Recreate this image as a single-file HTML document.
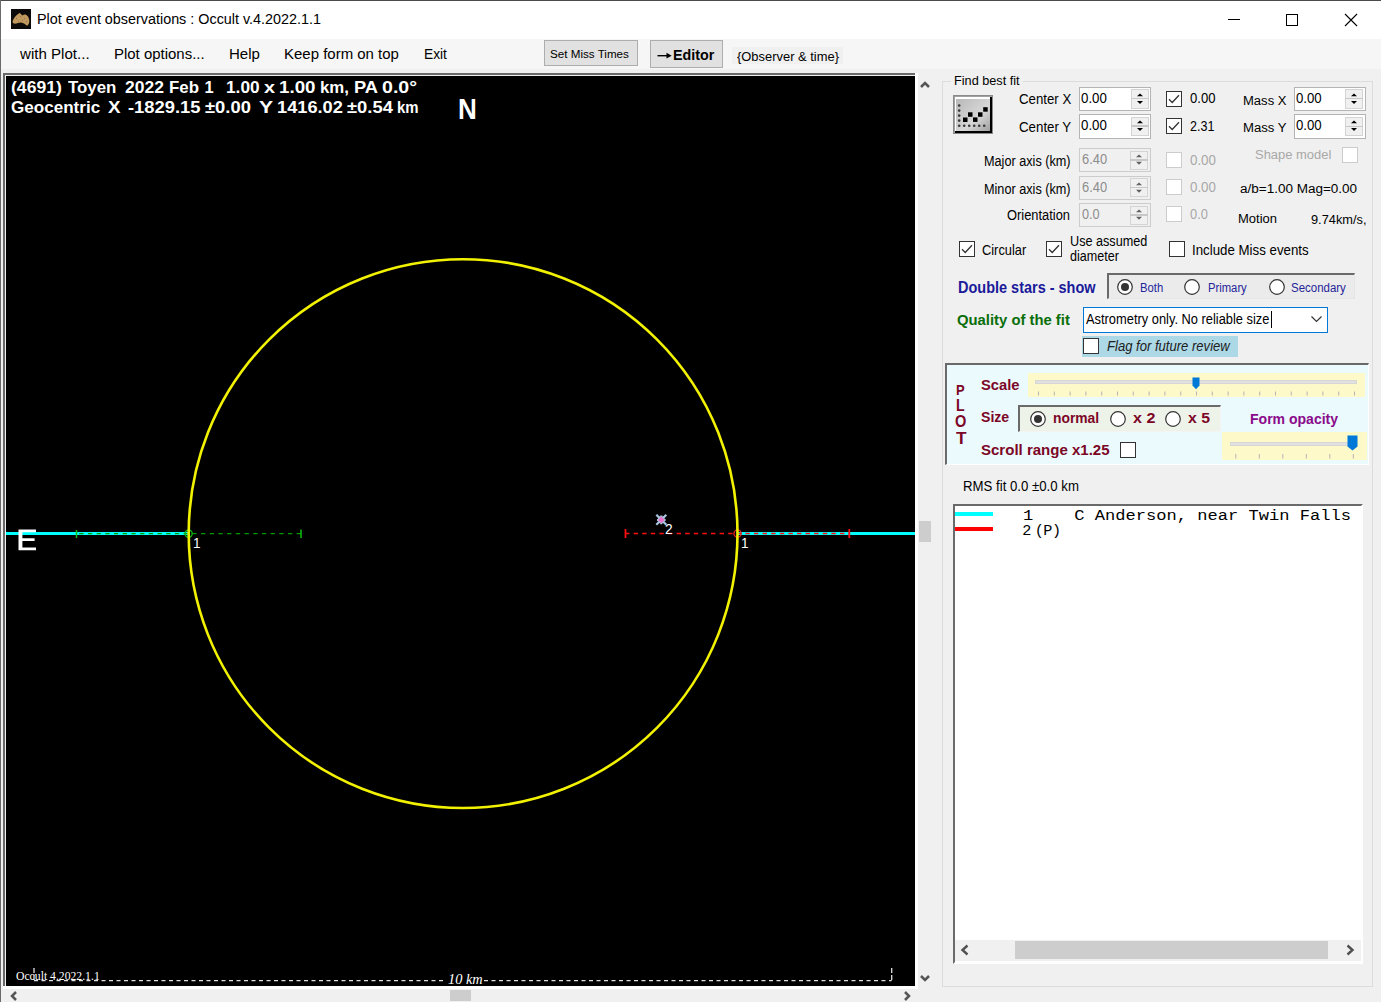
<!DOCTYPE html>
<html><head><meta charset="utf-8"><style>
html,body{margin:0;padding:0;width:1381px;height:1002px;overflow:hidden;background:#f0f0f0}
body>div{position:absolute;white-space:pre;box-sizing:border-box}
</style></head><body>
<div style="left:0px;top:0px;width:1381px;height:39px;background:#fff"></div>
<div style="left:0px;top:0px;width:1381px;height:1px;background:#4a4a4a"></div>
<div style="left:0px;top:0px;width:1px;height:1002px;background:#6a6a6a"></div>
<svg style="position:absolute;left:11px;top:9px" width="20" height="20" viewBox="0 0 20 20"><rect width="20" height="20" fill="#0c0a0a"/><path d="M1.5 12.5C2.5 9 5 6 8.5 4C10 4.5 10.5 6 11.5 6.5C12.5 5.5 13.5 5.2 15 5.8C17 7 18 9 18.3 11.5C18.5 14 17.5 16 16 16.8C14.5 15.5 12.5 14 10 13.6C8 13.8 5.5 14.8 3 14.6C2 14.2 1.5 13.5 1.5 12.5Z" fill="#c09a5c"/><path d="M5 9L6 10M9 7L10 8M13 9L14 10M7 12L8 12.5M15 12L16 13M11 11L12 11.5" stroke="#9a6a6a" stroke-width="1"/></svg>
<div style="left:36.80px;top:12.30px;font:normal normal 14.53px/14.53px 'Liberation Sans',sans-serif;color:#000;transform:scaleX(0.9895);transform-origin:0 0;">Plot event observations : Occult v.4.2022.1.1</div>
<div style="left:1228px;top:19px;width:12px;height:1px;background:#000"></div>
<div style="left:1286px;top:14px;width:12px;height:12px;border:1px solid #000"></div>
<svg style="position:absolute;left:1344px;top:13px" width="14" height="14" viewBox="0 0 14 14"><path d="M1 1L13 13M13 1L1 13" stroke="#000" stroke-width="1.1"/></svg>
<div style="left:1px;top:39px;width:1380px;height:963px;background:#f0f0f0"></div>
<div style="left:1px;top:39px;width:1380px;height:30.3px;background:#f6f6f6"></div>
<div style="left:20.13px;top:46.65px;font:normal normal 14.24px/14.24px 'Liberation Sans',sans-serif;color:#000;transform:scaleX(1.0596);transform-origin:0 0;">with Plot...</div>
<div style="left:114.00px;top:46.65px;font:normal normal 14.24px/14.24px 'Liberation Sans',sans-serif;color:#000;transform:scaleX(1.0507);transform-origin:0 0;">Plot options...</div>
<div style="left:228.70px;top:46.65px;font:normal normal 14.24px/14.24px 'Liberation Sans',sans-serif;color:#000;transform:scaleX(1.0569);transform-origin:0 0;">Help</div>
<div style="left:284.00px;top:46.65px;font:normal normal 14.24px/14.24px 'Liberation Sans',sans-serif;color:#000;transform:scaleX(1.0526);transform-origin:0 0;">Keep form on top</div>
<div style="left:423.90px;top:46.65px;font:normal normal 14.24px/14.24px 'Liberation Sans',sans-serif;color:#000;transform:scaleX(0.9666);transform-origin:0 0;">Exit</div>
<div style="left:544px;top:40px;width:94px;height:26.3px;background:#e1e1e1;border:1px solid #adadad"></div>
<div style="left:550.20px;top:48.00px;font:normal normal 11.7px/11.7px 'Liberation Sans',sans-serif;color:#000;transform:scaleX(0.9955);transform-origin:0 0;">Set Miss Times</div>
<div style="left:650px;top:40.3px;width:73px;height:28.2px;background:#e1e1e1;border:1px solid #adadad"></div>
<svg style="position:absolute;left:657px;top:51px" width="16" height="9" viewBox="0 0 16 9"><path d="M0.5 4.7H11" stroke="#000" stroke-width="1.4"/><path d="M9.5 1.8L14.7 4.7L9.5 7.6Z" fill="#000"/></svg>
<div style="left:673.10px;top:47.00px;font:normal bold 15px/15px 'Liberation Sans',sans-serif;color:#000;transform:scaleX(0.9545);transform-origin:0 0;">Editor</div>
<div style="left:732px;top:47px;width:111px;height:17px;background:#f0f0f0"></div>
<div style="left:736.50px;top:49.77px;font:normal normal 13.5px/13.5px 'Liberation Sans',sans-serif;color:#000;transform:scaleX(0.9568);transform-origin:0 0;">{Observer &amp; time}</div>
<div style="left:3px;top:73px;width:915px;height:916px;background:#fff"></div>
<div style="left:3px;top:73px;width:912px;height:2px;background:#696969"></div>
<div style="left:3px;top:73px;width:2px;height:913px;background:#696969"></div>
<div style="left:5px;top:75px;width:910px;height:1px;background:#f0f0f0"></div>
<div style="left:5px;top:75px;width:1px;height:911px;background:#f0f0f0"></div>
<div style="left:6px;top:76px;width:909px;height:910px;background:#000"></div>
<svg style="position:absolute;left:0;top:0" width="1381" height="1002">
<defs><clipPath id="pc"><rect x="6" y="76" width="909" height="910"/></clipPath></defs>
<g clip-path="url(#pc)">
<line x1="6" y1="533.5" x2="188" y2="533.5" stroke="#00ffff" stroke-width="3"/>
<line x1="738" y1="533.5" x2="915" y2="533.5" stroke="#00ffff" stroke-width="3"/>
<line x1="301" y1="533.6" x2="77" y2="533.6" stroke="#009a00" stroke-width="1.4" stroke-dasharray="4.3 4.4"/>
<line x1="76.5" y1="530" x2="76.5" y2="538" stroke="#10c010" stroke-width="1.5"/>
<line x1="301" y1="529.5" x2="301" y2="538" stroke="#10c010" stroke-width="1.5"/>
<line x1="625" y1="533.5" x2="849" y2="533.5" stroke="#ff1010" stroke-width="1.6" stroke-dasharray="4.4 4.2"/>
<line x1="625.5" y1="529" x2="625.5" y2="538" stroke="#ff1010" stroke-width="1.8"/>
<line x1="849.3" y1="529" x2="849.3" y2="538" stroke="#ff1010" stroke-width="1.8"/>
<circle cx="188.6" cy="533.6" r="3.6" fill="none" stroke="#10b010" stroke-width="1.4"/>
<circle cx="737.6" cy="533.5" r="3.6" fill="none" stroke="#e02020" stroke-width="1.4"/>
<circle cx="463.1" cy="533.6" r="274.4" fill="none" stroke="#f2f200" stroke-width="2.6"/>
<path d="M656.3 514.8L666.3 524.8M666.3 514.8L656.3 524.8M661.3 515.5V524.3M657 520H665.6" stroke="#a8c4e0" stroke-width="2.2"/>
<rect x="658" y="516.5" width="6.6" height="6.6" fill="#a8c4e0"/>
<path d="M661.3 516.6L664.6 519.9L661.3 523.2L658 519.9Z" fill="#e870c8"/>
<line x1="34" y1="980.7" x2="446" y2="980.7" stroke="#e0e0e0" stroke-width="1.3" stroke-dasharray="4 3.5"/>
<line x1="34" y1="968" x2="34" y2="981" stroke="#e0e0e0" stroke-width="1.3" stroke-dasharray="5 2"/>
<line x1="484" y1="980.7" x2="891.7" y2="980.7" stroke="#e0e0e0" stroke-width="1.3" stroke-dasharray="4 3.5"/>
<line x1="891.7" y1="968" x2="891.7" y2="981" stroke="#e0e0e0" stroke-width="1.3" stroke-dasharray="5 2"/>
</g></svg>
<div style="left:10.80px;top:79.33px;font:normal bold 16.5px/16.5px 'Liberation Sans',sans-serif;color:#fff;transform:scaleX(1.0660);transform-origin:0 0;">(4691)</div>
<div style="left:68.30px;top:79.33px;font:normal bold 16.5px/16.5px 'Liberation Sans',sans-serif;color:#fff;transform:scaleX(1.0216);transform-origin:0 0;">Toyen</div>
<div style="left:125.00px;top:79.33px;font:normal bold 16.5px/16.5px 'Liberation Sans',sans-serif;color:#fff;transform:scaleX(1.0612);transform-origin:0 0;">2022</div>
<div style="left:169.00px;top:79.33px;font:normal bold 16.5px/16.5px 'Liberation Sans',sans-serif;color:#fff;transform:scaleX(1.0213);transform-origin:0 0;">Feb</div>
<div style="left:226.30px;top:79.33px;font:normal bold 16.5px/16.5px 'Liberation Sans',sans-serif;color:#fff;transform:scaleX(1.0459);transform-origin:0 0;">1.00</div>
<div style="left:264.00px;top:79.33px;font:normal bold 16.5px/16.5px 'Liberation Sans',sans-serif;color:#fff;transform:scaleX(1.2055);transform-origin:0 0;">x</div>
<div style="left:279.00px;top:79.33px;font:normal bold 16.5px/16.5px 'Liberation Sans',sans-serif;color:#fff;transform:scaleX(1.1362);transform-origin:0 0;">1.00</div>
<div style="left:319.60px;top:79.33px;font:normal bold 16.5px/16.5px 'Liberation Sans',sans-serif;color:#fff;transform:scaleX(1.0185);transform-origin:0 0;">km,</div>
<div style="left:354.20px;top:79.33px;font:normal bold 16.5px/16.5px 'Liberation Sans',sans-serif;color:#fff;transform:scaleX(1.1080);transform-origin:0 0;">PA</div>
<div style="left:381.70px;top:79.33px;font:normal bold 16.5px/16.5px 'Liberation Sans',sans-serif;color:#fff;transform:scaleX(1.1864);transform-origin:0 0;">0.0&deg;</div>
<div style="left:204.50px;top:79.33px;font:normal bold 16.5px/16.5px 'Liberation Sans',sans-serif;color:#fff;">1</div>
<div style="left:10.80px;top:99.03px;font:normal bold 16.5px/16.5px 'Liberation Sans',sans-serif;color:#fff;transform:scaleX(1.0342);transform-origin:0 0;">Geocentric</div>
<div style="left:108.30px;top:99.03px;font:normal bold 16.5px/16.5px 'Liberation Sans',sans-serif;color:#fff;transform:scaleX(1.1364);transform-origin:0 0;">X</div>
<div style="left:128.30px;top:99.03px;font:normal bold 16.5px/16.5px 'Liberation Sans',sans-serif;color:#fff;transform:scaleX(1.1132);transform-origin:0 0;">-1829.15</div>
<div style="left:205.00px;top:99.03px;font:normal bold 16.5px/16.5px 'Liberation Sans',sans-serif;color:#fff;transform:scaleX(1.1137);transform-origin:0 0;">&plusmn;0.00</div>
<div style="left:259.20px;top:99.03px;font:normal bold 16.5px/16.5px 'Liberation Sans',sans-serif;color:#fff;transform:scaleX(1.2818);transform-origin:0 0;">Y</div>
<div style="left:276.70px;top:99.03px;font:normal bold 16.5px/16.5px 'Liberation Sans',sans-serif;color:#fff;transform:scaleX(1.1036);transform-origin:0 0;">1416.02</div>
<div style="left:346.70px;top:99.03px;font:normal bold 16.5px/16.5px 'Liberation Sans',sans-serif;color:#fff;transform:scaleX(1.1137);transform-origin:0 0;">&plusmn;0.54</div>
<div style="left:396.70px;top:99.03px;font:normal bold 16.5px/16.5px 'Liberation Sans',sans-serif;color:#fff;transform:scaleX(0.9047);transform-origin:0 0;">km</div>
<div style="left:458.20px;top:93.70px;font:normal bold 29.65px/29.65px 'Liberation Sans',sans-serif;color:#fff;transform:scaleX(0.8788);transform-origin:0 0;">N</div>
<svg style="position:absolute;left:0;top:0" width="60" height="600"><path d="M18.5 529.6H36V532.2H22.4V538.3H34.6V540.9H22.4V547.6H36V550.2H18.5Z" fill="#fff"/></svg>
<div style="left:192.50px;top:536.06px;font:normal normal 14.1px/14.1px 'Liberation Sans',sans-serif;color:#fff;transform:scaleX(0.9609);transform-origin:0 0;">1</div>
<div style="left:741.30px;top:536.06px;font:normal normal 14.1px/14.1px 'Liberation Sans',sans-serif;color:#fff;transform:scaleX(0.9609);transform-origin:0 0;">1</div>
<div style="left:664.60px;top:521.95px;font:normal normal 14.24px/14.24px 'Liberation Sans',sans-serif;color:#fff;transform:scaleX(0.9699);transform-origin:0 0;">2</div>
<div style="left:15.50px;top:969.91px;font:normal normal 12.52px/12.52px 'Liberation Serif',sans-serif;color:#fff;transform:scaleX(0.9335);transform-origin:0 0;">Occult 4.2022.1.1</div>
<div style="left:447.50px;top:971.72px;font:italic normal 14.66px/14.66px 'Liberation Serif',sans-serif;color:#fff;transform:scaleX(0.9814);transform-origin:0 0;">10 km</div>
<svg style="position:absolute;left:919px;top:79px" width="12" height="10" viewBox="0 0 12 10"><path d="M2 8L6 4L10 8" stroke="#555" stroke-width="2.5" fill="none"/></svg>
<svg style="position:absolute;left:919px;top:974px" width="12" height="10" viewBox="0 0 12 10"><path d="M2 2L6 6L10 2" stroke="#555" stroke-width="2.5" fill="none"/></svg>
<div style="left:919px;top:521px;width:12px;height:21px;background:#cdcdcd"></div>
<svg style="position:absolute;left:9px;top:990px" width="10" height="12" viewBox="0 0 10 12"><path d="M7 2L3 6L7 10" stroke="#555" stroke-width="2.5" fill="none"/></svg>
<svg style="position:absolute;left:902px;top:990px" width="10" height="12" viewBox="0 0 10 12"><path d="M3 2L7 6L3 10" stroke="#555" stroke-width="2.5" fill="none"/></svg>
<div style="left:450px;top:989.5px;width:21px;height:11.5px;background:#cdcdcd"></div>
<div style="left:942px;top:81px;width:431px;height:906px;border:1px solid #dcdcdc"></div>
<div style="left:951px;top:74px;width:72px;height:14px;background:#f0f0f0"></div>
<div style="left:954.00px;top:75.17px;font:normal normal 12.79px/12.79px 'Liberation Sans',sans-serif;color:#000;transform:scaleX(0.9927);transform-origin:0 0;">Find best fit</div>
<svg style="position:absolute;left:953px;top:95px" width="41" height="40" viewBox="0 0 41 40">
<defs><linearGradient id="fg" x1="0" y1="0" x2="1" y2="1"><stop offset="0" stop-color="#b8b8b8"/><stop offset="0.6" stop-color="#d8d8d8"/><stop offset="1" stop-color="#a0a0a0"/></linearGradient></defs>
<rect x="0.5" y="0.5" width="39" height="38" fill="#a0a0a0" stroke="#8a8a8a"/>
<rect x="2" y="2" width="37" height="36" fill="#000"/>
<rect x="2" y="2" width="35" height="34" fill="#fff"/>
<rect x="3" y="4" width="34" height="32" fill="url(#fg)"/>
<g fill="#383838">
<circle cx="6.2" cy="10.5" r="1.3"/><circle cx="6.2" cy="15.6" r="1.3"/><circle cx="6.2" cy="20.6" r="1.3"/><circle cx="6.2" cy="25.6" r="1.3"/><circle cx="6.2" cy="30.7" r="1.3"/>
<circle cx="11.2" cy="30.7" r="1.3"/><circle cx="16.2" cy="30.7" r="1.3"/><circle cx="21.2" cy="30.7" r="1.3"/><circle cx="26.2" cy="30.7" r="1.3"/><circle cx="31.2" cy="30.7" r="1.3"/>
</g>
<g fill="#000">
<rect x="10" y="22.5" width="4.5" height="4.5"/><rect x="15" y="17.3" width="4.5" height="4.5"/><rect x="20" y="22.4" width="4.5" height="4.5"/><rect x="25" y="17.3" width="4.5" height="4.5"/><rect x="30.2" y="12.2" width="4.5" height="4.5"/>
</g>
</svg>
<div style="left:1018.70px;top:92.42px;font:normal normal 14.39px/14.39px 'Liberation Sans',sans-serif;color:#000;transform:scaleX(0.9206);transform-origin:0 0;">Center X</div>
<div style="left:1018.70px;top:119.72px;font:normal normal 14.39px/14.39px 'Liberation Sans',sans-serif;color:#000;transform:scaleX(0.9247);transform-origin:0 0;">Center Y</div>
<div style="left:1078.5px;top:86.5px;width:72.5px;height:24.5px;background:#fff;border:1px solid #b4b4b4"></div>
<div style="left:1130.5px;top:89.0px;width:18px;height:19.5px;background:#f0f0f0;border:1px solid #d4d4d4"></div>
<div style="left:1130.5px;top:97.75px;width:18px;height:1.5px;background:#c8c8c8"></div>
<svg style="position:absolute;left:1135.5px;top:92.5px" width="8" height="14.5"><path d="M1 3.2L4 0.5L7 3.2Z" fill="#000"/><path d="M1 8.0L4 11.0L7 8.0Z" fill="#000"/></svg>
<div style="left:1081.30px;top:90.62px;font:normal normal 14.39px/14.39px 'Liberation Sans',sans-serif;color:#000;transform:scaleX(0.9240);transform-origin:0 0;">0.00</div>
<div style="left:1078.5px;top:114px;width:72.5px;height:24.5px;background:#fff;border:1px solid #b4b4b4"></div>
<div style="left:1130.5px;top:116.5px;width:18px;height:19.5px;background:#f0f0f0;border:1px solid #d4d4d4"></div>
<div style="left:1130.5px;top:125.25px;width:18px;height:1.5px;background:#c8c8c8"></div>
<svg style="position:absolute;left:1135.5px;top:120px" width="8" height="14.5"><path d="M1 3.2L4 0.5L7 3.2Z" fill="#000"/><path d="M1 8.0L4 11.0L7 8.0Z" fill="#000"/></svg>
<div style="left:1081.30px;top:118.12px;font:normal normal 14.39px/14.39px 'Liberation Sans',sans-serif;color:#000;transform:scaleX(0.9240);transform-origin:0 0;">0.00</div>
<div style="left:1166px;top:90.5px;width:16px;height:16px;background:#fff;border:1px solid #333333"></div>
<svg style="position:absolute;left:1166px;top:90.5px" width="16" height="16" viewBox="0 0 16 16"><path d="M3 8.3L6.2 11.5L13 4.2" stroke="#333" stroke-width="1.3" fill="none"/></svg>
<div style="left:1166px;top:118px;width:16px;height:16px;background:#fff;border:1px solid #333333"></div>
<svg style="position:absolute;left:1166px;top:118px" width="16" height="16" viewBox="0 0 16 16"><path d="M3 8.3L6.2 11.5L13 4.2" stroke="#333" stroke-width="1.3" fill="none"/></svg>
<div style="left:1190.00px;top:91.25px;font:normal normal 14.83px/14.83px 'Liberation Sans',sans-serif;color:#000;transform:scaleX(0.8822);transform-origin:0 0;">0.00</div>
<div style="left:1190.00px;top:119.23px;font:normal normal 14.97px/14.97px 'Liberation Sans',sans-serif;color:#000;transform:scaleX(0.8360);transform-origin:0 0;">2.31</div>
<div style="left:1242.50px;top:93.56px;font:normal normal 13.52px/13.52px 'Liberation Sans',sans-serif;color:#000;transform:scaleX(0.9652);transform-origin:0 0;">Mass X</div>
<div style="left:1242.50px;top:121.26px;font:normal normal 13.52px/13.52px 'Liberation Sans',sans-serif;color:#000;transform:scaleX(0.9706);transform-origin:0 0;">Mass Y</div>
<div style="left:1293.5px;top:86.7px;width:72px;height:24.5px;background:#fff;border:1px solid #b4b4b4"></div>
<div style="left:1345.0px;top:89.2px;width:18px;height:19.5px;background:#f0f0f0;border:1px solid #d4d4d4"></div>
<div style="left:1345.0px;top:97.95px;width:18px;height:1.5px;background:#c8c8c8"></div>
<svg style="position:absolute;left:1350.0px;top:92.7px" width="8" height="14.5"><path d="M1 3.2L4 0.5L7 3.2Z" fill="#000"/><path d="M1 8.0L4 11.0L7 8.0Z" fill="#000"/></svg>
<div style="left:1296.30px;top:90.82px;font:normal normal 14.39px/14.39px 'Liberation Sans',sans-serif;color:#000;transform:scaleX(0.9169);transform-origin:0 0;">0.00</div>
<div style="left:1293.5px;top:114.3px;width:72px;height:24.5px;background:#fff;border:1px solid #b4b4b4"></div>
<div style="left:1345.0px;top:116.8px;width:18px;height:19.5px;background:#f0f0f0;border:1px solid #d4d4d4"></div>
<div style="left:1345.0px;top:125.55px;width:18px;height:1.5px;background:#c8c8c8"></div>
<svg style="position:absolute;left:1350.0px;top:120.3px" width="8" height="14.5"><path d="M1 3.2L4 0.5L7 3.2Z" fill="#000"/><path d="M1 8.0L4 11.0L7 8.0Z" fill="#000"/></svg>
<div style="left:1296.30px;top:118.42px;font:normal normal 14.39px/14.39px 'Liberation Sans',sans-serif;color:#000;transform:scaleX(0.9169);transform-origin:0 0;">0.00</div>
<div style="left:983.80px;top:154.10px;font:normal normal 14.53px/14.53px 'Liberation Sans',sans-serif;color:#000;transform:scaleX(0.8728);transform-origin:0 0;">Major axis (km)</div>
<div style="left:983.80px;top:181.50px;font:normal normal 14.53px/14.53px 'Liberation Sans',sans-serif;color:#000;transform:scaleX(0.8728);transform-origin:0 0;">Minor axis (km)</div>
<div style="left:1007.00px;top:208.15px;font:normal normal 14.24px/14.24px 'Liberation Sans',sans-serif;color:#000;transform:scaleX(0.9040);transform-origin:0 0;">Orientation</div>
<div style="left:1078.7px;top:148.2px;width:72px;height:24.3px;background:#f0f0f0;border:1px solid #cccccc"></div>
<div style="left:1130.2px;top:150.7px;width:18px;height:19.3px;background:#f0f0f0;border:1px solid #d4d4d4"></div>
<div style="left:1130.2px;top:159.35px;width:18px;height:1.5px;background:#c8c8c8"></div>
<svg style="position:absolute;left:1135.2px;top:154.2px" width="8" height="14.3"><path d="M1 3.2L4 0.5L7 3.2Z" fill="#606060"/><path d="M1 7.800000000000001L4 10.8L7 7.800000000000001Z" fill="#606060"/></svg>
<div style="left:1081.50px;top:152.32px;font:normal normal 14.39px/14.39px 'Liberation Sans',sans-serif;color:#8c8c8c;transform:scaleX(0.8955);transform-origin:0 0;">6.40</div>
<div style="left:1078.7px;top:175.6px;width:72px;height:24.3px;background:#f0f0f0;border:1px solid #cccccc"></div>
<div style="left:1130.2px;top:178.1px;width:18px;height:19.3px;background:#f0f0f0;border:1px solid #d4d4d4"></div>
<div style="left:1130.2px;top:186.75px;width:18px;height:1.5px;background:#c8c8c8"></div>
<svg style="position:absolute;left:1135.2px;top:181.6px" width="8" height="14.3"><path d="M1 3.2L4 0.5L7 3.2Z" fill="#606060"/><path d="M1 7.800000000000001L4 10.8L7 7.800000000000001Z" fill="#606060"/></svg>
<div style="left:1081.50px;top:179.72px;font:normal normal 14.39px/14.39px 'Liberation Sans',sans-serif;color:#8c8c8c;transform:scaleX(0.8955);transform-origin:0 0;">6.40</div>
<div style="left:1078.7px;top:203px;width:72px;height:24.3px;background:#f0f0f0;border:1px solid #cccccc"></div>
<div style="left:1130.2px;top:205.5px;width:18px;height:19.3px;background:#f0f0f0;border:1px solid #d4d4d4"></div>
<div style="left:1130.2px;top:214.15px;width:18px;height:1.5px;background:#c8c8c8"></div>
<svg style="position:absolute;left:1135.2px;top:209px" width="8" height="14.3"><path d="M1 3.2L4 0.5L7 3.2Z" fill="#606060"/><path d="M1 7.800000000000001L4 10.8L7 7.800000000000001Z" fill="#606060"/></svg>
<div style="left:1081.50px;top:207.12px;font:normal normal 14.39px/14.39px 'Liberation Sans',sans-serif;color:#8c8c8c;transform:scaleX(0.8841);transform-origin:0 0;">0.0</div>
<div style="left:1166.3px;top:151.7px;width:16px;height:16px;background:#fff;border:1px solid #cccccc"></div>
<div style="left:1166.3px;top:179px;width:16px;height:16px;background:#fff;border:1px solid #cccccc"></div>
<div style="left:1166.3px;top:206.3px;width:16px;height:16px;background:#fff;border:1px solid #cccccc"></div>
<div style="left:1190.00px;top:152.97px;font:normal normal 14.68px/14.68px 'Liberation Sans',sans-serif;color:#a8a8a8;transform:scaleX(0.9089);transform-origin:0 0;">0.00</div>
<div style="left:1190.00px;top:180.10px;font:normal normal 14.53px/14.53px 'Liberation Sans',sans-serif;color:#a8a8a8;transform:scaleX(0.9185);transform-origin:0 0;">0.00</div>
<div style="left:1190.00px;top:207.35px;font:normal normal 14.24px/14.24px 'Liberation Sans',sans-serif;color:#a8a8a8;transform:scaleX(0.9047);transform-origin:0 0;">0.0</div>
<div style="left:1255.00px;top:148.24px;font:normal normal 13.66px/13.66px 'Liberation Sans',sans-serif;color:#a8a8a8;transform:scaleX(0.9483);transform-origin:0 0;">Shape model</div>
<div style="left:1342.4px;top:147px;width:15.5px;height:15.5px;background:#fff;border:1px solid #cccccc"></div>
<div style="left:1239.80px;top:182.89px;font:normal normal 12.65px/12.65px 'Liberation Sans',sans-serif;color:#000;transform:scaleX(1.0682);transform-origin:0 0;">a/b=1.00 Mag=0.00</div>
<div style="left:1237.50px;top:212.59px;font:normal normal 12.65px/12.65px 'Liberation Sans',sans-serif;color:#000;transform:scaleX(1.0277);transform-origin:0 0;">Motion</div>
<div style="left:1311.10px;top:213.44px;font:normal normal 13.66px/13.66px 'Liberation Sans',sans-serif;color:#000;transform:scaleX(0.9363);transform-origin:0 0;">9.74km/s,</div>
<div style="left:958.6px;top:241px;width:16px;height:16px;background:#fff;border:1px solid #333333"></div>
<svg style="position:absolute;left:958.6px;top:241px" width="16" height="16" viewBox="0 0 16 16"><path d="M3 8.3L6.2 11.5L13 4.2" stroke="#333" stroke-width="1.3" fill="none"/></svg>
<div style="left:981.70px;top:241.60px;font:normal normal 15.12px/15.12px 'Liberation Sans',sans-serif;color:#000;transform:scaleX(0.8494);transform-origin:0 0;">Circular</div>
<div style="left:1046px;top:241px;width:16px;height:16px;background:#fff;border:1px solid #333333"></div>
<svg style="position:absolute;left:1046px;top:241px" width="16" height="16" viewBox="0 0 16 16"><path d="M3 8.3L6.2 11.5L13 4.2" stroke="#333" stroke-width="1.3" fill="none"/></svg>
<div style="left:1069.90px;top:234.12px;font:normal normal 14.39px/14.39px 'Liberation Sans',sans-serif;color:#000;transform:scaleX(0.8799);transform-origin:0 0;">Use assumed</div>
<div style="left:1069.90px;top:247.60px;font:normal normal 15.12px/15.12px 'Liberation Sans',sans-serif;color:#000;transform:scaleX(0.8310);transform-origin:0 0;">diameter</div>
<div style="left:1168.5px;top:241px;width:16px;height:16px;background:#fff;border:1px solid #333333"></div>
<div style="left:1192.00px;top:241.60px;font:normal normal 15.12px/15.12px 'Liberation Sans',sans-serif;color:#000;transform:scaleX(0.8795);transform-origin:0 0;">Include Miss events</div>
<div style="left:958.00px;top:279.71px;font:normal bold 15.7px/15.7px 'Liberation Sans',sans-serif;color:#1a1a9a;transform:scaleX(0.9228);transform-origin:0 0;">Double stars - show</div>
<div style="left:1106.5px;top:273px;width:248.5px;height:26px;background:#ebebeb;border-top:2px solid #6a6a6a;border-left:2px solid #6a6a6a;border-right:1px solid #e6e6e6;border-bottom:1px solid #e6e6e6"></div>
<svg style="position:absolute;left:1117.3px;top:279.2px" width="16" height="16" viewBox="0 0 16 16"><circle cx="8" cy="8" r="7.3" fill="#fff" stroke="#333" stroke-width="1.2"/><circle cx="8" cy="8" r="4" fill="#333"/></svg>
<div style="left:1140.30px;top:281.92px;font:normal normal 12.5px/12.5px 'Liberation Sans',sans-serif;color:#25259a;transform:scaleX(0.9010);transform-origin:0 0;">Both</div>
<svg style="position:absolute;left:1184.4px;top:279.2px" width="16" height="16" viewBox="0 0 16 16"><circle cx="8" cy="8" r="7.3" fill="#fff" stroke="#333" stroke-width="1.2"/></svg>
<div style="left:1207.80px;top:281.92px;font:normal normal 12.5px/12.5px 'Liberation Sans',sans-serif;color:#25259a;transform:scaleX(0.9000);transform-origin:0 0;">Primary</div>
<svg style="position:absolute;left:1268.5px;top:279.2px" width="16" height="16" viewBox="0 0 16 16"><circle cx="8" cy="8" r="7.3" fill="#fff" stroke="#333" stroke-width="1.2"/></svg>
<div style="left:1291.00px;top:281.92px;font:normal normal 12.5px/12.5px 'Liberation Sans',sans-serif;color:#25259a;transform:scaleX(0.9172);transform-origin:0 0;">Secondary</div>
<div style="left:956.70px;top:311.80px;font:normal bold 15.12px/15.12px 'Liberation Sans',sans-serif;color:#0a6e0a;transform:scaleX(0.9814);transform-origin:0 0;">Quality of the fit</div>
<div style="left:1082.5px;top:306.5px;width:245.5px;height:26px;background:#fff;border:1px solid #0078d7"></div>
<div style="left:1086.30px;top:311.72px;font:normal normal 14.39px/14.39px 'Liberation Sans',sans-serif;color:#000;transform:scaleX(0.8947);transform-origin:0 0;">Astrometry only. No reliable size</div>
<div style="left:1271px;top:311px;width:1px;height:17px;background:#000"></div>
<svg style="position:absolute;left:1310px;top:315px" width="14" height="9"><path d="M1.5 1.5L6.5 6.5L11.5 1.5" stroke="#333" stroke-width="1.2" fill="none"/></svg>
<div style="left:1082px;top:336.2px;width:156.4px;height:21px;background:#add8e6"></div>
<div style="left:1082.6px;top:338px;width:16px;height:16px;background:#fff;border:1px solid #333333"></div>
<div style="left:1106.50px;top:338.87px;font:italic normal 14.68px/14.68px 'Liberation Sans',sans-serif;color:#202020;transform:scaleX(0.8908);transform-origin:0 0;">Flag for future review</div>
<div style="left:945px;top:362.5px;width:424px;height:102px;background:#ebfafd;border-top:2px solid #6a6a6a;border-left:2px solid #6a6a6a;border-right:1px solid #fff;border-bottom:1px solid #fff"></div>
<div style="left:955.90px;top:382.28px;font:normal bold 15.26px/15.26px 'Liberation Sans',sans-serif;color:#7c0626;transform:scaleX(0.8488);transform-origin:0 0;">P</div>
<div style="left:955.90px;top:398.31px;font:normal bold 15.7px/15.7px 'Liberation Sans',sans-serif;color:#7c0626;transform:scaleX(0.9009);transform-origin:0 0;">L</div>
<div style="left:954.70px;top:414.21px;font:normal bold 15.7px/15.7px 'Liberation Sans',sans-serif;color:#7c0626;transform:scaleX(0.9275);transform-origin:0 0;">O</div>
<div style="left:955.50px;top:430.51px;font:normal bold 15.7px/15.7px 'Liberation Sans',sans-serif;color:#7c0626;transform:scaleX(1.1000);transform-origin:0 0;">T</div>
<div style="left:980.60px;top:377.95px;font:normal bold 14.24px/14.24px 'Liberation Sans',sans-serif;color:#7c0626;transform:scaleX(1.0329);transform-origin:0 0;">Scale</div>
<div style="left:1028px;top:373px;width:336.5px;height:23.5px;background:#fdf9c9"></div>
<div style="left:1035px;top:379.5px;width:322px;height:4px;background:#e1e1e1;border:1px solid #d6d6d6"></div>
<svg style="position:absolute;left:1028px;top:373px" width="337" height="24"><rect x="10.0" y="18.5" width="1" height="4" fill="#b4b4b4"/><rect x="25.8" y="18.5" width="1" height="4" fill="#b4b4b4"/><rect x="41.6" y="18.5" width="1" height="4" fill="#b4b4b4"/><rect x="57.4" y="18.5" width="1" height="4" fill="#b4b4b4"/><rect x="73.2" y="18.5" width="1" height="4" fill="#b4b4b4"/><rect x="89.0" y="18.5" width="1" height="4" fill="#b4b4b4"/><rect x="104.8" y="18.5" width="1" height="4" fill="#b4b4b4"/><rect x="120.6" y="18.5" width="1" height="4" fill="#b4b4b4"/><rect x="136.4" y="18.5" width="1" height="4" fill="#b4b4b4"/><rect x="152.2" y="18.5" width="1" height="4" fill="#b4b4b4"/><rect x="168.0" y="18.5" width="1" height="4" fill="#b4b4b4"/><rect x="183.8" y="18.5" width="1" height="4" fill="#b4b4b4"/><rect x="199.6" y="18.5" width="1" height="4" fill="#b4b4b4"/><rect x="215.4" y="18.5" width="1" height="4" fill="#b4b4b4"/><rect x="231.2" y="18.5" width="1" height="4" fill="#b4b4b4"/><rect x="247.0" y="18.5" width="1" height="4" fill="#b4b4b4"/><rect x="262.8" y="18.5" width="1" height="4" fill="#b4b4b4"/><rect x="278.6" y="18.5" width="1" height="4" fill="#b4b4b4"/><rect x="294.4" y="18.5" width="1" height="4" fill="#b4b4b4"/><rect x="310.2" y="18.5" width="1" height="4" fill="#b4b4b4"/><rect x="326.0" y="18.5" width="1" height="4" fill="#b4b4b4"/></svg>
<svg style="position:absolute;left:1192px;top:376.5px" width="8" height="13"><path d="M0.5 0.5H7.5V8.5L4 12.3L0.5 8.5Z" fill="#0078d7"/></svg>
<div style="left:980.60px;top:409.97px;font:normal bold 14.68px/14.68px 'Liberation Sans',sans-serif;color:#7c0626;transform:scaleX(0.9605);transform-origin:0 0;">Size</div>
<div style="left:1017.5px;top:404.8px;width:203px;height:27.5px;background:#eef3ea;border-top:2px solid #6a6a6a;border-left:2px solid #6a6a6a;border-right:1px solid #f4f4f4;border-bottom:1px solid #f4f4f4"></div>
<svg style="position:absolute;left:1030px;top:410.7px" width="16" height="16" viewBox="0 0 16 16"><circle cx="8" cy="8" r="7.3" fill="#fff" stroke="#333" stroke-width="1.2"/><circle cx="8" cy="8" r="4" fill="#333"/></svg>
<div style="left:1052.80px;top:410.06px;font:normal bold 15.41px/15.41px 'Liberation Sans',sans-serif;color:#7c0626;transform:scaleX(0.8975);transform-origin:0 0;">normal</div>
<svg style="position:absolute;left:1110px;top:410.9px" width="16" height="16" viewBox="0 0 16 16"><circle cx="8" cy="8" r="7.3" fill="#fff" stroke="#333" stroke-width="1.2"/></svg>
<div style="left:1132.60px;top:410.30px;font:normal bold 15.12px/15.12px 'Liberation Sans',sans-serif;color:#7c0626;transform:scaleX(1.0645);transform-origin:0 0;">x 2</div>
<svg style="position:absolute;left:1164.7px;top:410.9px" width="16" height="16" viewBox="0 0 16 16"><circle cx="8" cy="8" r="7.3" fill="#fff" stroke="#333" stroke-width="1.2"/></svg>
<div style="left:1187.90px;top:410.30px;font:normal bold 15.12px/15.12px 'Liberation Sans',sans-serif;color:#7c0626;transform:scaleX(1.0455);transform-origin:0 0;">x 5</div>
<div style="left:1249.50px;top:411.55px;font:normal bold 14.83px/14.83px 'Liberation Sans',sans-serif;color:#8a0a8a;transform:scaleX(0.9460);transform-origin:0 0;">Form opacity</div>
<div style="left:1222px;top:432.2px;width:144.5px;height:27.5px;background:#fdf9c9"></div>
<div style="left:1230px;top:441.5px;width:126px;height:4px;background:#e1e1e1;border:1px solid #d6d6d6"></div>
<svg style="position:absolute;left:1222px;top:432.2px" width="145" height="28"><rect x="13.3" y="22" width="1" height="4.5" fill="#b4b4b4"/><rect x="36.8" y="22" width="1" height="4.5" fill="#b4b4b4"/><rect x="60.3" y="22" width="1" height="4.5" fill="#b4b4b4"/><rect x="83.8" y="22" width="1" height="4.5" fill="#b4b4b4"/><rect x="107.3" y="22" width="1" height="4.5" fill="#b4b4b4"/><rect x="130.8" y="22" width="1" height="4.5" fill="#b4b4b4"/></svg>
<svg style="position:absolute;left:1347px;top:435px" width="11" height="16"><path d="M0.5 0.5H10.5V11.5L5.5 15.5L0.5 11.5Z" fill="#0078d7"/></svg>
<div style="left:981.30px;top:442.52px;font:normal bold 14.39px/14.39px 'Liberation Sans',sans-serif;color:#7c0626;transform:scaleX(1.0444);transform-origin:0 0;">Scroll range x1.25</div>
<div style="left:1120px;top:442.4px;width:15.5px;height:15.5px;background:#fff;border:1px solid #333333"></div>
<div style="left:962.60px;top:479.25px;font:normal normal 14.24px/14.24px 'Liberation Sans',sans-serif;color:#000;transform:scaleX(0.9281);transform-origin:0 0;">RMS fit 0.0 &plusmn;0.0 km</div>
<div style="left:952.5px;top:503.5px;width:410px;height:460px;background:#fff;border-top:2px solid #6a6a6a;border-left:2px solid #6a6a6a;border-right:2px solid #fff;border-bottom:2px solid #fff"></div>
<div style="left:954.8px;top:511.6px;width:38.5px;height:4.6px;background:#00ffff"></div>
<div style="left:954.8px;top:526.6px;width:38.5px;height:4.6px;background:#ff0000"></div>
<div style="left:1022.90px;top:508.79px;font:normal normal 15.02px/15.02px 'Liberation Mono',sans-serif;color:#000;transform:scaleX(1.1372);transform-origin:0 0;">1    C Anderson, near Twin Falls</div>
<div style="left:1022.20px;top:523.55px;font:normal normal 15.2px/15.2px 'Liberation Mono',sans-serif;color:#000;">2</div>
<div style="left:1034.80px;top:523.55px;font:normal normal 15.2px/15.2px 'Liberation Mono',sans-serif;color:#000;">(</div>
<div style="left:1043.20px;top:523.55px;font:normal normal 15.2px/15.2px 'Liberation Mono',sans-serif;color:#000;">P</div>
<div style="left:1052.00px;top:523.55px;font:normal normal 15.2px/15.2px 'Liberation Mono',sans-serif;color:#000;">)</div>
<div style="left:954.5px;top:940.2px;width:406px;height:21.3px;background:#f0f0f0"></div>
<div style="left:1014.8px;top:940.6px;width:313.6px;height:18.3px;background:#cdcdcd"></div>
<svg style="position:absolute;left:958px;top:943px" width="14" height="14"><path d="M9.5 2.5L4.5 7L9.5 11.5" stroke="#505050" stroke-width="2.4" fill="none"/></svg>
<svg style="position:absolute;left:1343px;top:943px" width="14" height="14"><path d="M4.5 2.5L9.5 7L4.5 11.5" stroke="#505050" stroke-width="2.4" fill="none"/></svg>
</body></html>
